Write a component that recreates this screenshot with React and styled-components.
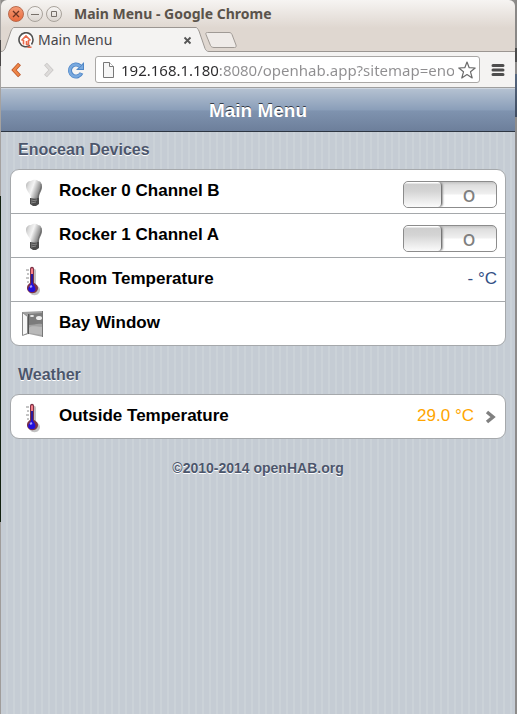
import React, {useState} from 'react';
import styled, {createGlobalStyle} from 'styled-components';


const GlobalStyle = createGlobalStyle`
  * {
    box-sizing: border-box;
  }

  body {
    margin: 0;
    font-family: "Liberation Sans", Arial, sans-serif;
  }

  button {
    padding: 0;
    border: 0;
    background: none;
    cursor: pointer;
  }

  svg {
    display: block;
  }
`

/* strip of desktop and terminal that shows on both sides of the window */
const Desktop = styled.div`
  display: grid;
  grid-template-columns: 1px minmax(0, 1fr) 2px;
  min-height: 100vh;
  background: #8f8d8b;
`
const LeftStrip = styled.div`
  background: linear-gradient(#a5a2a0 40px, #4a4848 40px, #4a4848 66px, #a5a2a0 66px, #a5a2a0 196px,
    #12200f 196px, #12200f 522px, #a09d9b 522px);
`
const RightStrip = styled.div`
  background: linear-gradient(#8a8886 48px, #4c4c4c 48px, #4c4c4c 62px, #8d8b8a 62px, #8d8b8a 74px,
    #56677f 74px, #3f4c60 117px, #8d8b8a 117px);
`
const Window = styled.div`
  display: flex;
  flex-direction: column;
  border-radius: 6px 6px 0 0;
  overflow: hidden;
`

const Chrome = styled.header`
  font-family: "Open Sans", "Noto Sans", sans-serif;
  background: linear-gradient(#f6f4f2, #dfd7d0 28px);
`
const TitleBar = styled.div`
  display: flex;
  align-items: center;
  gap: 3px;
  height: 27px;
  padding-left: 7px;
`
const WindowButton = styled.button`
  display: grid;
  place-items: center;
  width: 16px;
  height: 16px;
  border: 1px solid ${({$close}) => $close ? '#b9684a' : '#a8a29b'};
  border-radius: 50%;
  background: ${({$close}) => $close
    ? 'linear-gradient(#f49a75, #e96a3d)'
    : 'linear-gradient(#f7f5f3, #dcd6d0)'};
`
const WindowTitle = styled.span`
  margin-left: 9px;
  font-family: "Noto Sans", sans-serif;
  font-size: 14px;
  font-weight: 700;
  line-height: 20px;
  color: #5a534b;
  white-space: nowrap;
`

const TabStrip = styled.div`
  display: flex;
  height: 25px;
  background: linear-gradient(#9b9692, #9b9692) bottom / 100% 1px no-repeat;
`
const Tab = styled.div`
  display: flex;
`
const TabBody = styled.div`
  display: flex;
  align-items: center;
  width: 182px;
  padding: 0 4px;
  border-top: 1px solid #9b9692;
  background: #f4f3f2;
`
const TabTitle = styled.span`
  flex: 1;
  margin-left: 4px;
  font-family: "Noto Sans", sans-serif;
  font-size: 14px;
  line-height: 20px;
  color: #46454a;
`
const NewTab = styled.button`
  align-self: center;
  margin-left: -4px;
`

const Toolbar = styled.div`
  display: flex;
  align-items: center;
  height: 36px;
  padding: 0 9px 0 8px;
  border-bottom: 1px solid #9e9e9e;
  background: #f4f3f2;
`
const ToolButton = styled.button`
  display: grid;
  place-items: center;
  flex: none;
  width: 16px;
  height: 24px;
  margin-right: ${({$gap}) => $gap || 0}px;
`
const AddressBar = styled.div`
  display: flex;
  align-items: center;
  flex: 1;
  min-width: 0;
  height: 27px;
  margin-right: 10px;
  padding: 0 5px 0 6px;
  border: 1px solid #a9a7a5;
  border-radius: 3px;
  background: #fff;
`
/* the host part is darker than the rest of the address */
const AddressInput = styled.input`
  flex: 1;
  min-width: 0;
  height: 24px;
  margin: 0 4px 0 6px;
  padding: 0;
  border: 0;
  outline: 0;
  font-family: "Noto Sans", sans-serif;
  font-size: 15px;
  color: transparent;
  background: linear-gradient(to right, #2b2a2c 97px, #8f8e90 97px);
  background-clip: text;
  -webkit-background-clip: text;
`

const Page = styled.div`
  flex: 1;
  background: repeating-linear-gradient(to right, #c5ccd4 0, #c5ccd4 5px, #cbd2d8 5px, #cbd2d8 7px);
`
const TopBar = styled.div`
  height: 44px;
  border-top: 1px solid #cdd5df;
  border-bottom: 1px solid #2d3642;
  background: linear-gradient(#b4c1d1, #8a9eb9 50%, #7f93af 52%, #6d7f9b);
`
const PageTitle = styled.h1`
  margin: 0;
  font-size: 19px;
  line-height: 43px;
  color: #fff;
  text-align: center;
  text-shadow: 0 -1px 0 #333a46;
`
const Content = styled.main`
  display: flex;
  flex-direction: column;
  gap: 19px;
  padding: 8px 9px 0;
`
const SectionTitle = styled.h2`
  margin: 0 0 9px 8px;
  font-size: 16px;
  line-height: 20px;
  color: #4c566c;
  text-shadow: 0 1px 0 #fff;
`
const Card = styled.ul`
  margin: 0;
  padding: 0;
  list-style: none;
  border: 1px solid #a5a8ab;
  border-radius: 9px;
  background: #fff;
  overflow: hidden;
`
const Item = styled.li`
  & + & {
    border-top: 1px solid #a5a8ab;
  }
`
const Row = styled.div`
  display: flex;
  align-items: center;
  height: 43px;
  padding: 0 8px 2px;
  color: #000;
  text-decoration: none;
`
const RowIcon = styled.span`
  flex: none;
  width: 30px;
  margin: 2px 10px 0 0;
`
const RowLabel = styled.label`
  flex: 1;
  font-size: 17px;
  font-weight: 700;
  line-height: 20px;
`
const Value = styled.span`
  font-size: 17px;
  line-height: 20px;
  color: ${({color}) => color || '#324f85'};
`
const Arrow = styled.span`
  margin: 2px 0 0 11px;
`

const Switch = styled.span`
  display: grid;
  align-content: start;
  width: 94px;
  height: 27px;
  margin-top: 8px;
  border: 1px solid #8c8c8c;
  border-radius: 5px;
  background: linear-gradient(#c4c4c4, #dedede 3px, #f0f0f0 12px, #fff 13px);
  overflow: hidden;

  & > * {
    grid-area: 1 / 1;
  }
`
const SwitchInput = styled.input`
  appearance: none;
  justify-self: ${({checked}) => checked ? 'end' : 'start'};
  width: 38px;
  height: 25px;
  margin: 0;
  border-right: 1px solid #777;
  border-radius: 4px;
  background: linear-gradient(#fff 1px, #cecece 2px, #d4d4d4 9px, #fbfbfb);
  box-shadow: 1px 0 2px #999;
  cursor: pointer;
`
const SwitchText = styled.span`
  justify-self: ${({$on}) => $on ? 'start' : 'end'};
  width: 54px;
  font-family: "Open Sans", sans-serif;
  font-size: 16px;
  font-weight: 600;
  line-height: 29px;
  color: #7f7f7f;
  text-align: center;
  pointer-events: none;
`
const Footer = styled.footer`
  font-size: 14px;
  font-weight: 700;
  line-height: 20px;
  color: #4c566c;
  text-align: center;
  text-shadow: 0 1px 0 #fff;
`


const BulbIcon = () => (
    <svg width="30" height="32" viewBox="0 0 30 32">
        <defs>
            <linearGradient id="glass" x1="0" y1="0" x2="1" y2="0.4">
                <stop offset="0" stopColor="#a9a9a9"/>
                <stop offset="0.25" stopColor="#dcdcdc"/>
                <stop offset="0.5" stopColor="#f4f4f4"/>
                <stop offset="1" stopColor="#777"/>
            </linearGradient>
        </defs>
        <path d="M7 10c0-3 2-5 5-5 2-1 5-2 7 0 3 0 4 3 4 6 0 4-3 6-3 11h-8c0-4-5-7-5-12z" fill="url(#glass)"/>
        <path d="M22 8c1 5-3 8-3 14" fill="none" stroke="#555" strokeOpacity="0.5"/>
        <path d="M11 22h9v6l-3 2h-3l-3-2z" fill="#4b4b4b"/>
        <path d="M12 23l6-1M12 25l6-1M12 27l5-1" stroke="#8a8a8a"/>
    </svg>
)

const ThermometerIcon = () => (
    <svg width="30" height="32" viewBox="0 0 30 32">
        <path d="M12 5c0-3 4-3 4 0v14c4 2 5 5 3 8-2 3-7 3-9 0s-1-6 2-8z" fill="#777" opacity="0.45"
              transform="translate(1 2)"/>
        <path d="M11 5c0-3 4-3 4 0v14c4 2 5 5 3 8-2 3-7 3-9 0s-1-6 2-8z" fill="#7c3348"/>
        <path d="M12 5c0-1 2-1 2 0v5h-2z" fill="#f77f88"/>
        <path d="M12 10h2v10h-2z" fill="#2a1a9c"/>
        <path d="M13 18l3 5c1 3 0 5-3 5s-5-2-3-5z" fill="#2310dc"/>
        <path d="M11 23l2-1" stroke="#a5a0ff" strokeWidth="2"/>
        <path d="M7 6h3M8 10h2M7 14h3M8 18h2" stroke="#888"/>
    </svg>
)

const WindowIcon = () => (
    <svg width="30" height="32" viewBox="0 0 30 32">
        <path d="M3 4l21-1v26L10 26l-6 1z" fill="#a2a2a2"/>
        <path d="M10 6l13-1v11c-5-1-8 1-13 1z" fill="#7c7c7c"/>
        <path d="M3.500 4.500l5 4v17l-5 2z" fill="#f7f7f7" stroke="#888"/>
        <path d="M9.500 6v20" stroke="#555"/>
        <ellipse cx="13" cy="8" rx="2" ry="1" fill="#eee"/>
        <ellipse cx="20" cy="10" rx="3" ry="2" fill="#eee"/>
        <path d="M10 20c3-3 7-1 13-1v8l-13-2z" fill="#b9b9b9"/>
        <path d="M23.500 3v26" stroke="#777"/>
    </svg>
)

const icons = {bulb: BulbIcon, thermometer: ThermometerIcon, window: WindowIcon}

const sections = [
    {
        title: 'Enocean Devices',
        items: [
            {id: 'rocker0', icon: 'bulb', label: 'Rocker 0 Channel B', toggle: true},
            {id: 'rocker1', icon: 'bulb', label: 'Rocker 1 Channel A', toggle: true},
            {id: 'room', icon: 'thermometer', label: 'Room Temperature', value: '- °C'},
            {id: 'bay', icon: 'window', label: 'Bay Window'},
        ],
    },
    {
        title: 'Weather',
        items: [
            {id: 'outside', icon: 'thermometer', label: 'Outside Temperature', value: '29.0 °C', color: '#ffa500', link: true},
        ],
    },
]


const Toggle = ({id}) => {
    const [on, setOn] = useState(false)
    return (
        <Switch>
            <SwitchInput id={id} type="checkbox" checked={on} onChange={() => setOn(!on)}/>
            <SwitchText $on={on}>{on ? 'I' : 'O'}</SwitchText>
        </Switch>
    )
}

const MenuItem = ({id, icon, label, toggle, value, color, link}) => {
    const Icon = icons[icon]
    return (
        <Item>
            <Row as={link ? 'a' : 'div'} href={link ? `#${id}` : undefined}>
                <RowIcon><Icon/></RowIcon>
                <RowLabel as={toggle ? 'label' : 'span'} htmlFor={toggle ? id : undefined}>{label}</RowLabel>
                {toggle ? <Toggle id={id}/> : null}
                {value ? <Value color={color}>{value}</Value> : null}
                {link ?
                    <Arrow>
                        <svg width="12" height="14" viewBox="0 0 12 14">
                            <path d="M2 2l6 5-6 5" fill="none" stroke="#808080" strokeWidth="3.500"/>
                        </svg>
                    </Arrow> : null}
            </Row>
        </Item>
    )
}

const BrowserChrome = () => {
    const [address, setAddress] = useState('192.168.1.180:8080/openhab.app?sitemap=enocean')
    return (
        <Chrome>
            <TitleBar>
                <WindowButton $close aria-label="Close">
                    <svg width="8" height="8" viewBox="0 0 8 8">
                        <path d="M1 1l6 6M7 1L1 7" stroke="#6b3322" strokeWidth="1.3"/>
                    </svg>
                </WindowButton>
                <WindowButton aria-label="Minimize">
                    <svg width="8" height="8" viewBox="0 0 8 8">
                        <path d="M0 4.5h8" stroke="#77706a"/>
                    </svg>
                </WindowButton>
                <WindowButton aria-label="Maximize">
                    <svg width="8" height="8" viewBox="0 0 8 8">
                        <path d="M1.5 1.5h5v5h-5z" fill="none" stroke="#77706a"/>
                    </svg>
                </WindowButton>
                <WindowTitle>Main Menu - Google Chrome</WindowTitle>
            </TitleBar>
            <TabStrip>
                <Tab>
                    <svg width="13" height="25" viewBox="0 0 13 25">
                        <path d="M0 25v-1c2 0 3-1 4-3L10 4c1-2 2-3.5 3-3.5V25z" fill="#f4f3f2"/>
                        <path d="M0 24.5c2 0 3-1 4-3L10 4c1-2 2-3.5 3-3.5" fill="none" stroke="#9b9692"/>
                    </svg>
                    <TabBody>
                        <svg width="16" height="16" viewBox="0 0 16 16">
                            <path d="M12 13.500A7 7 0 1 1 15 8" fill="#fff" stroke="#505050" strokeWidth="1.600"/>
                            <path d="M15 8c0 2-.5 3-1.500 4.500" fill="none" stroke="#505050" strokeWidth="1.600"/>
                            <path d="M3.500 8.500L8 4l4.500 4.500M5.500 8v4.500M10.500 8v4.500H8.500V9" fill="none"
                                  stroke="#e96a4c" strokeWidth="1.600"/>
                            <path d="M9.500 15.200h4" stroke="#e96a4c" strokeWidth="1.600"/>
                        </svg>
                        <TabTitle>Main Menu</TabTitle>
                        <button aria-label="Close tab">
                            <svg width="9" height="9" viewBox="0 0 9 9">
                                <path d="M1.500 1.500l6 6M7.500 1.500l-6 6" stroke="#555" strokeWidth="1.8"/>
                            </svg>
                        </button>
                    </TabBody>
                    <svg width="13" height="25" viewBox="0 0 13 25">
                        <path d="M13 25v-1c-2 0-3-1-4-3L3 4C2 2 1 .5 0 .5V25z" fill="#f4f3f2"/>
                        <path d="M13 24.500c-2 0-3-1-4-3L3 4C2 2 1 .5 0 .5" fill="none" stroke="#9b9692"/>
                    </svg>
                </Tab>
                <NewTab aria-label="New tab">
                    <svg width="32" height="16" viewBox="0 0 32 16">
                        <path d="M2.500.5H24c2 0 2.500 1 3 2l4 10.500c.5 1.500 0 2.500-1.500 2.500H9c-2 0-3-1-3.500-2L1 2.500C.5 1 1 .5 2.500.5z"
                              fill="#efebe8" stroke="#a09a95"/>
                    </svg>
                </NewTab>
            </TabStrip>
            <Toolbar>
                <ToolButton $gap={16} aria-label="Back">
                    <svg width="16" height="18" viewBox="0 0 16 18">
                        <path d="M10.500 3L5 9l5.500 6" fill="none" stroke="#b9552a" strokeWidth="4"/>
                        <path d="M10 3.500L5 9l5 5.500" fill="none" stroke="#ee8648" strokeWidth="2.500"/>
                    </svg>
                </ToolButton>
                <ToolButton $gap={11} aria-label="Forward">
                    <svg width="16" height="18" viewBox="0 0 16 18">
                        <path d="M4.500 3l5.500 6-5.500 6" fill="none" stroke="#c9c7c6" strokeWidth="4"/>
                        <path d="M5 3.500L10 9l-5 5.500" fill="none" stroke="#dddbda" strokeWidth="2.500"/>
                    </svg>
                </ToolButton>
                <ToolButton $gap={11} aria-label="Reload">
                    <svg width="16" height="18" viewBox="0 0 16 18">
                        <path d="M13.500 12A6 6 0 1 1 12 5" fill="none" stroke="#4f86c6" strokeWidth="4"/>
                        <path d="M16 1v8H8z" fill="#4f86c6"/>
                        <path d="M13 12.500A6 6 0 1 1 12 5.300" fill="none" stroke="#79a9df" strokeWidth="2.400"/>
                        <path d="M15 3.500V8h-4.500z" fill="#79a9df"/>
                    </svg>
                </ToolButton>
                <AddressBar>
                    <svg width="13" height="16" viewBox="0 0 13 16">
                        <path d="M1.500 .5h6l4 4v11h-10z" fill="#f6f6f6" stroke="#777"/>
                        <path d="M7.500.5v4h4" fill="#fff" stroke="#777"/>
                    </svg>
                    <AddressInput aria-label="Address" value={address} onChange={e => setAddress(e.target.value)}/>
                    <ToolButton aria-label="Bookmark this page">
                        <svg width="18" height="18" viewBox="0 0 18 18">
                            <path d="M9 1l2.200 5.700 6 .3-4.700 3.800L14.200 17 9 13.500 3.800 17l1.700-6.200L.8 7l6-.3z"
                                  fill="#fff" stroke="#6b6b6b" strokeWidth="1.200" strokeLinejoin="round"/>
                        </svg>
                    </ToolButton>
                </AddressBar>
                <ToolButton aria-label="Menu">
                    <svg width="14" height="14" viewBox="0 0 14 14">
                        <path d="M2 2.500h10M2 7h10M2 11.500h10" stroke="#4d4d4d" strokeWidth="3" strokeLinecap="round"/>
                    </svg>
                </ToolButton>
            </Toolbar>
        </Chrome>
    )
}

const App = () => {
    return (
        <Desktop>
            <GlobalStyle/>
            <LeftStrip/>
            <Window>
                <BrowserChrome/>
                <Page>
                    <TopBar>
                        <PageTitle>Main Menu</PageTitle>
                    </TopBar>
                    <Content>
                        {sections.map(section => (
                            <section key={section.title}>
                                <SectionTitle>{section.title}</SectionTitle>
                                <Card>
                                    {section.items.map(item => <MenuItem key={item.id} {...item}/>)}
                                </Card>
                            </section>
                        ))}
                        <Footer>©2010-2014 openHAB.org</Footer>
                    </Content>
                </Page>
            </Window>
            <RightStrip/>
        </Desktop>
    );
};

export default App;
